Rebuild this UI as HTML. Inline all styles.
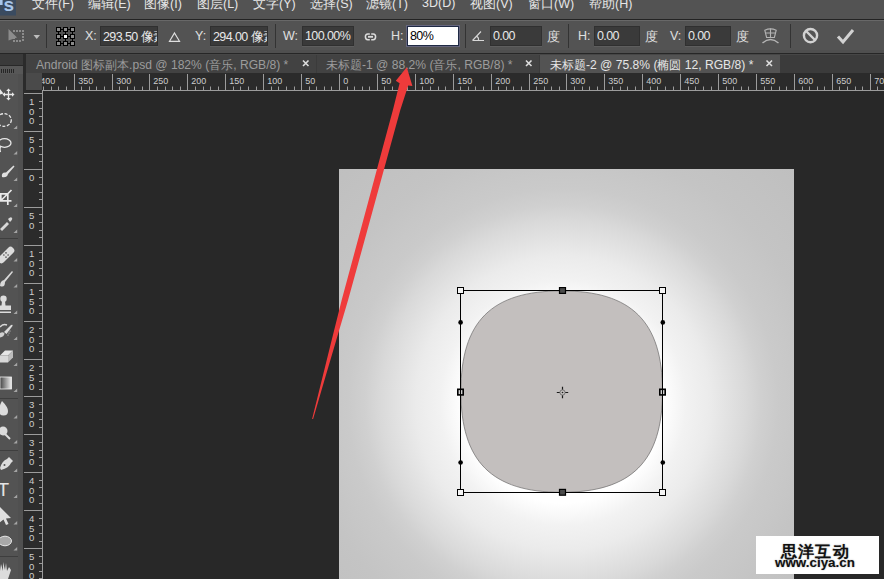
<!DOCTYPE html>
<html><head><meta charset="utf-8">
<style>
*{margin:0;padding:0;box-sizing:border-box}
html,body{width:884px;height:579px;overflow:hidden;background:#282828;font-family:"Liberation Sans", sans-serif}
.a{position:absolute}
#menu{left:0;top:0;width:884px;height:20px;background:#535353;}
#menu span{position:absolute;top:-4px;font-size:12.5px;color:#e6e6e6;white-space:nowrap}
#sep1{left:0;top:19px;width:884px;height:2px;background:linear-gradient(#232323 0 1px,#686868 1px 2px)}
#opts{left:0;top:21px;width:884px;height:32px;background:#535353}
#optline{left:0;top:50px;width:884px;height:5px;background:linear-gradient(#4f4f4f 0 3px,#262626 3px 4px,#464646 4px 5px)}
#tabs{left:0;top:55px;width:884px;height:18px;background:#3b3b3b}
.tab{position:absolute;top:0;height:18px;background:#424242;color:#9c9c9c;font-size:12.1px;white-space:nowrap}
.tab span{position:absolute;top:2px}
.tab .x{position:absolute;top:1px;color:#d8d8d8;font-size:13px}
.lbl{position:absolute;color:#e0e0e0;font-size:12.5px;top:8px}
.inp{position:absolute;top:5px;height:20px;background:#3a3a3a;border:1px solid #303030;box-shadow:0 1px 0 #5e5e5e;color:#e8e8e8;font-size:12.5px;letter-spacing:-0.6px;padding:2px 0 0 2px;white-space:nowrap;overflow:hidden}
.vsep{position:absolute;top:4px;width:1px;height:24px;background:#3a3a3a}
#canvas{left:42px;top:90px;width:842px;height:489px;background:#282828}
#doc{left:339px;top:169px;width:455px;height:410px;background:radial-gradient(circle at 224px 234px,#ffffff 0px,#ffffff 100px,#f2f2f2 123px,#ebebeb 147px,#e2e2e2 165px,#d9d9d9 183px,#d0d0d0 198px,#cacaca 215px,#c4c4c4 256px,#bfbfbf 330px)}
#tools{left:0;top:66px;width:23px;height:513px;background:#535353}
#toolstop{left:0;top:54px;width:23px;height:12px;background:#3b3b3b}
#toolgap{left:23px;top:54px;width:3px;height:525px;background:#2b2b2b}
#hr{left:42px;top:73px;width:842px;height:18px;background:#2b2b2b}
#vr{left:24px;top:91px;width:19px;height:488px;background:#2b2b2b}
#corner{left:26px;top:73px;width:16px;height:17px;background:#4a4a4a}
svg text{font-family:"Liberation Sans", sans-serif}
#hr line,#vr line{stroke:#9c9c9c;stroke-width:1}
#hr text{fill:#cdcdcd;font-size:9px}
#vr text{fill:#cdcdcd;font-size:9.6px}
</style></head><body>
<div id="canvas" class="a"></div>
<div id="doc" class="a"></div>
<svg class="a" style="left:0;top:0" width="884" height="579">
 <path d="M460.9 391.4 C460.9 321.4 491.5 290.9 561.5 290.9 C631.5 290.9 662.5 321.4 662.5 391.4 C662.5 461.4 631.5 492.3 561.5 492.3 C491.5 492.3 460.9 461.4 460.9 391.4 Z" fill="#c3bfbe" stroke="#6a6868" stroke-width="0.7"/>
 <rect x="460.5" y="290.5" width="202" height="202" fill="none" stroke="#000" stroke-width="1"/>
 <g stroke="#000" stroke-width="1" fill="#f4f4f4">
  <rect x="457.5" y="287.5" width="6" height="6"/>
  <rect x="659.5" y="287.5" width="6" height="6"/>
  <rect x="457.5" y="489.5" width="6" height="6"/>
  <rect x="659.5" y="489.5" width="6" height="6"/>
 </g>
 <g stroke="#000" stroke-width="1.2" fill="#4a4a4a">
  <rect x="559.5" y="287.6" width="6" height="5.8"/>
  <rect x="559.5" y="489.4" width="6" height="5.8"/>
 </g>
 <g stroke="#000" stroke-width="1.6" fill="#d0d0d0">
  <rect x="457.8" y="389.3" width="5.4" height="5.6"/>
  <rect x="659.8" y="389.3" width="5.4" height="5.6"/>
 </g>
 <path d="M460.5 389.5 V395.5 M662.5 389.5 V395.5" stroke="#000" stroke-width="1"/>
 <g fill="#000"><circle cx="460.6" cy="322.4" r="2.3"/><circle cx="460.6" cy="462.5" r="2.3"/><circle cx="662.8" cy="322.4" r="2.3"/><circle cx="662.8" cy="462.5" r="2.3"/></g>
 <g stroke="#1a1a1a" stroke-width="1.2" fill="none">
  <path d="M556.8 392.5 H559.8 M565.2 392.5 H568.2 M562.5 386.8 V389.8 M562.5 395.2 V398.2"/>
  <circle cx="562.5" cy="392.5" r="2.6" stroke="#555" stroke-width="0.7"/>
 </g>
 <circle cx="562.5" cy="392.5" r="0.8" fill="#222"/>
</svg>

<div class="a" style="left:756px;top:536px;width:123px;height:38px;background:#fff"></div>
<div class="a" style="left:781px;top:542px;font-size:16px;font-weight:bold;color:#111;letter-spacing:1.2px;white-space:nowrap;text-shadow:0 0 1.5px #999">思洋互动</div>
<div class="a" style="left:775px;top:555px;font-size:13.4px;font-weight:bold;color:#111;white-space:nowrap;text-shadow:0 0 1.5px #999">www.ciya.cn</div>


<div id="menu" class="a">
 <svg class="a" style="left:0;top:0" width="17" height="16"><rect x="0" y="0" width="16" height="15.5" fill="#3a4b60"/><text x="3.5" y="11" font-family="Liberation Sans" font-weight="bold" font-size="19" fill="#a9c7ea">s</text><rect x="0" y="0" width="2.6" height="5" fill="#a9c7ea"/></svg>
 <span style="left:32px">文件(F)</span>
 <span style="left:88px">编辑(E)</span>
 <span style="left:144px">图像(I)</span>
 <span style="left:197px">图层(L)</span>
 <span style="left:253px">文字(Y)</span>
 <span style="left:310px">选择(S)</span>
 <span style="left:366px">滤镜(T)</span>
 <span style="left:422px">3D(D)</span>
 <span style="left:470px">视图(V)</span>
 <span style="left:528px">窗口(W)</span>
 <span style="left:589px">帮助(H)</span>
</div>
<div id="sep1" class="a"></div>
<div id="opts" class="a">
 <svg class="a" style="left:0;top:0" width="884" height="32">
  <g fill="#8c8c8c">
   <path d="M8.5 8 L17 16.5 L8.5 19.5 Z"/>
   <rect x="13" y="9" width="2" height="2"/><rect x="16" y="9" width="2" height="2"/><rect x="19" y="9" width="2" height="2"/><rect x="22" y="9" width="2" height="2"/>
   <rect x="22" y="12" width="2" height="2"/><rect x="22" y="15" width="2" height="2"/><rect x="22" y="18" width="2" height="2"/>
   <rect x="13" y="19" width="2" height="2"/><rect x="16" y="19" width="2" height="2"/><rect x="19" y="19" width="2" height="2"/>
   <rect x="13" y="16" width="2" height="2"/>
  </g>
  <path d="M33.5 14 L40 14 L36.75 18 Z" fill="#bdbdbd"/>
  <rect x="46" y="3" width="1" height="24" fill="#333"/>
  <path d="M58.5 8.5 V22.5 M65.5 8.5 V22.5 M72.5 8.5 V22.5 M58.5 8.5 H72.5 M58.5 15.5 H72.5 M58.5 22.5 H72.5" stroke="#000" stroke-width="1" fill="none"/>
  <g stroke="#000" stroke-width="1"><rect x="56.5" y="6.5" width="4" height="4" fill="#8a8a8a"/><rect x="63.5" y="6.5" width="4" height="4" fill="#8a8a8a"/><rect x="70.5" y="6.5" width="4" height="4" fill="#8a8a8a"/><rect x="56.5" y="13.5" width="4" height="4" fill="#8a8a8a"/><rect x="63.5" y="13.5" width="4" height="4" fill="#fff"/><rect x="70.5" y="13.5" width="4" height="4" fill="#8a8a8a"/><rect x="56.5" y="20.5" width="4" height="4" fill="#8a8a8a"/><rect x="63.5" y="20.5" width="4" height="4" fill="#8a8a8a"/><rect x="70.5" y="20.5" width="4" height="4" fill="#8a8a8a"/></g>
  <path d="M174.5 12 L179.5 20.3 H169.5 Z" fill="none" stroke="#e0e0e0" stroke-width="1.2"/>
  <rect x="275" y="3" width="1" height="24" fill="#333"/>
  <g fill="none" stroke="#dcdcdc" stroke-width="1.5">
   <path d="M369.8 12.9 H367.8 Q365.4 12.9 365.4 15.8 Q365.4 18.7 367.8 18.7 H369.8"/>
   <path d="M371.2 12.9 H373.2 Q375.6 12.9 375.6 15.8 Q375.6 18.7 373.2 18.7 H371.2"/>
  </g>
  <rect x="368" y="14.9" width="5" height="1.8" fill="#dcdcdc"/>
  <rect x="465" y="3" width="1" height="24" fill="#333"/>
  <path d="M472.5 19.5 H484 M472.5 19.5 L481 10.5 M478.5 19.5 Q479 16.5 476.5 15" fill="none" stroke="#d8d8d8" stroke-width="1.1"/>
  <rect x="568" y="3" width="1" height="24" fill="#333"/>
  <g fill="none" stroke="#b4b4b4" stroke-width="1.1">
   <path d="M764.8 9.2 Q770.5 6.6 776.2 9.2 L774.4 16.5 H766.6 Z"/>
   <path d="M770.5 7.4 V16.5 M765.8 12 H775.2"/>
   <path d="M762.5 22 Q770.5 15 778.5 22" stroke-width="1.4"/>
  </g>
  <rect x="790" y="3" width="1" height="24" fill="#333"/>
  <g fill="none" stroke="#d2d2d2" stroke-width="2.4">
   <circle cx="810.5" cy="14.6" r="6.6"/>
   <path d="M806 10 L815 19"/>
  </g>
  <path d="M838 15.5 L843 21 L853 9" fill="none" stroke="#d2d2d2" stroke-width="3"/>
 </svg>
 <span class="lbl" style="left:85px">X:</span>
 <div class="inp" style="left:100px;width:58px">293.50 像素</div>
 <span class="lbl" style="left:195px">Y:</span>
 <div class="inp" style="left:210px;width:58px">294.00 像素</div>
 <span class="lbl" style="left:283px">W:</span>
 <div class="inp" style="left:302px;width:52px">100.00%</div>
 <span class="lbl" style="left:391px">H:</span>
 <div class="inp" style="left:407px;width:52px;background:#fff;border-color:#1f2a44;color:#000;box-shadow:0 0 0 1px #66667e">80%</div>
 <div class="inp" style="left:490px;width:52px">0.00</div>
 <span class="lbl" style="left:547px">度</span>
 <span class="lbl" style="left:578px">H:</span>
 <div class="inp" style="left:594px;width:46px">0.00</div>
 <span class="lbl" style="left:645px">度</span>
 <span class="lbl" style="left:670px">V:</span>
 <div class="inp" style="left:685px;width:46px">0.00</div>
 <span class="lbl" style="left:736px">度</span>
</div>
<div id="optline" class="a"></div>
<div id="tabs" class="a">
 <div class="tab" style="left:26px;width:290px"><span style="left:10px">Android 图标副本.psd @ 182% (音乐, RGB/8) *</span></div>
 <div class="tab" style="left:317px;width:222px"><span style="left:9px">未标题-1 @ 88.2% (音乐, RGB/8) *</span></div>
 <div class="tab" style="left:540px;width:240px;background:#535353;color:#e6e6e6"><span style="left:10px">未标题-2 @ 75.8% (椭圆 12, RGB/8) *</span></div>
 <svg class="a" style="left:0;top:-1px" width="884" height="19"><g stroke="#dedede" stroke-width="1.6">
  <path d="M303 6.5 L308.5 12 M308.5 6.5 L303 12"/>
  <path d="M526 6.5 L531.5 12 M531.5 6.5 L526 12"/>
  <path d="M766.5 6.5 L772 12 M772 6.5 L766.5 12"/>
 </g></svg>
</div>
<svg class="a" style="left:0;top:54px" width="23" height="525">
 <rect x="0" y="0" width="23" height="11" fill="#3a3a3a"/>
 <rect x="0" y="11" width="23" height="1" fill="#282828"/>
 <rect x="0" y="12" width="23" height="8" fill="#575757"/>
 <g fill="#262626"><rect x="1" y="15" width="1" height="4"/><rect x="3" y="15" width="1" height="4"/><rect x="5" y="15" width="1" height="4"/><rect x="7" y="15" width="1" height="4"/><rect x="9" y="15" width="1" height="4"/><rect x="11" y="15" width="1" height="4"/><rect x="13" y="15" width="1" height="4"/></g>
 <rect x="0" y="20" width="23" height="505" fill="#535353"/>
 <rect x="18" y="20" width="5" height="505" fill="#505050"/>
</svg>
<svg class="a" style="left:0;top:0" width="23" height="579">
 <g fill="#a4a4a4">
  <path d="M13.5 129.0 L17.2 129.0 L17.2 125.5 Z"/><path d="M13.5 154.5 L17.2 154.5 L17.2 151.0 Z"/><path d="M13.5 181.0 L17.2 181.0 L17.2 177.5 Z"/>
  <path d="M13.5 207.0 L17.2 207.0 L17.2 203.5 Z"/><path d="M13.5 233.0 L17.2 233.0 L17.2 229.5 Z"/><path d="M13.5 261.5 L17.2 261.5 L17.2 258.0 Z"/>
  <path d="M13.5 287.5 L17.2 287.5 L17.2 284.0 Z"/><path d="M13.5 314.0 L17.2 314.0 L17.2 310.5 Z"/><path d="M13.5 340.0 L17.2 340.0 L17.2 336.5 Z"/>
  <path d="M13.5 366.0 L17.2 366.0 L17.2 362.5 Z"/><path d="M13.5 392.0 L17.2 392.0 L17.2 388.5 Z"/><path d="M13.5 418.5 L17.2 418.5 L17.2 415.0 Z"/>
  <path d="M13.5 443.5 L17.2 443.5 L17.2 440.0 Z"/><path d="M13.5 472.0 L17.2 472.0 L17.2 468.5 Z"/><path d="M13.5 498.0 L17.2 498.0 L17.2 494.5 Z"/>
  <path d="M13.5 524.5 L17.2 524.5 L17.2 521.0 Z"/><path d="M13.5 550.5 L17.2 550.5 L17.2 547.0 Z"/>
 </g>
 <g fill="#3e3e3e"><rect x="0" y="238" width="18" height="1"/><rect x="0" y="398" width="18" height="1"/><rect x="0" y="450" width="18" height="1"/><rect x="0" y="556" width="18" height="1"/></g>
 <g stroke="#e8e8e8" fill="none" stroke-width="1.3">
  <path d="M8.5 90 V99 M4 94.5 H13"/>
  <ellipse cx="4" cy="120" rx="7.3" ry="6.3" stroke-dasharray="3 1.6"/>
  <ellipse cx="4.5" cy="143" rx="6.5" ry="4.3"/><path d="M0.5 146.5 Q-0.5 149 0.5 152"/>
  <path d="M0 193.8 H7.8 V205 M0.8 193.8 V200.8 H11.5 M1.5 200 L11.5 190" stroke-width="1.7"/>
 </g>
 <path d="M8.5 88.5 L10.8 91 H6.2Z M8.5 100.5 L10.8 98 H6.2Z M2.5 94.5 L5 92.2 V96.8Z M14.5 94.5 L12 92.2 V96.8Z M0 89 L3.5 93.5 L0 94.5Z" fill="#e8e8e8"/>
 <path d="M2 177 Q1 172 6 172.5 L13.5 165.5 L14.5 166.5 L8 174 Q7 178 2 177Z" fill="#e0e0e0"/>
 <path d="M0 229 L7 222 L9 224 L2 231 Z M8 219 Q11 216 12 218 Q13 219 10 222 Z" fill="#d8d8d8"/>
 <g transform="translate(6,255) rotate(-45)"><rect x="-10" y="-3.6" width="20" height="7.2" rx="3.2" fill="#dcdcdc"/><g fill="#555"><circle cx="-1.5" cy="-1.5" r="0.8"/><circle cx="1.5" cy="-1.5" r="0.8"/><circle cx="-1.5" cy="1.5" r="0.8"/><circle cx="1.5" cy="1.5" r="0.8"/></g></g>
 <path d="M0 286 Q0 281 4 280 L12 271 L13 272 L5 282 Q5 288 0 286Z" fill="#d8d8d8"/>
 <circle cx="3.5" cy="298.8" r="3.2" fill="#dcdcdc"/><path d="M2 301 H5 L5.5 305.5 H11 V310 H0 V305.5 H1.5 Z M0 311.5 H11 V313 H0Z" fill="#dcdcdc"/>
 <path d="M0 327 Q3 323.5 7 325" fill="none" stroke="#d8d8d8" stroke-width="1.4"/><path d="M4 332 L11 325 Q13 324 12.5 326 L6.5 334 Z" fill="#dcdcdc"/><path d="M0 333 Q3 331.5 4.5 333.5 Q4 337 0 337.5Z" fill="#d0d0d0"/><g fill="#eee"><circle cx="10" cy="331" r="0.5"/><circle cx="9" cy="333" r="0.5"/><circle cx="8" cy="335" r="0.5"/></g>
 <path d="M0 355.5 L5 350.5 H13 L8 355.5 Z" fill="#e6e6e6"/><path d="M0 355.5 H8 V362.5 H0Z" fill="#d8d8d8"/><path d="M8 355.5 L13 350.5 V357.5 L8 362.5Z" fill="#bcbcbc"/>
 <defs><linearGradient id="gr" x1="0" x2="1"><stop offset="0" stop-color="#444"/><stop offset="1" stop-color="#eee"/></linearGradient></defs>
 <rect x="0" y="377" width="11.5" height="12" fill="url(#gr)" stroke="#f0f0f0" stroke-width="0.8"/>
 <path d="M2 401 Q8 407 8 411 Q8 415.5 3.5 415.5 Q-1 415.5 -1 411 Q-1 406 2 401Z" fill="#dcdcdc"/>
 <circle cx="3" cy="431" r="4.5" fill="#dcdcdc"/><path d="M5 434 L10 439" stroke="#dcdcdc" stroke-width="2"/>
 <path d="M0 468 Q2 461 7 459 L9 457 L13 461 L11 463 Q9 468 1 470 Z" fill="#dcdcdc"/><circle cx="4.5" cy="465" r="1" fill="#535353"/>
 <text x="-2.5" y="495.5" font-family="Liberation Serif" font-size="19" fill="#e4e4e4">T</text>
 <path d="M-1 506 L11 518 L6 518.5 L8.5 524 L6 525 L3.5 519.5 L-1 523 Z" fill="#e0e0e0"/>
 <ellipse cx="5" cy="541" rx="6.5" ry="4.8" fill="#a8a8a8" stroke="#e8e8e8" stroke-width="1"/>
 <path d="M0 579 V571 L1 564 L3 571 L3 562 L5 570 L6 563 L7 571 L9 567 L11 570 L8 579Z" fill="#dcdcdc"/>
</svg>
<div id="toolgap" class="a"></div>
<div id="corner" class="a"></div>
<svg id="hr" class="a" width="842" height="18" style="overflow:hidden"><rect x="0" y="17" width="842" height="1" fill="#9c9c9c"/><line x1="-28.5" y1="13.5" x2="-28.5" y2="17"/>
<line x1="-20.5" y1="13.5" x2="-20.5" y2="17"/>
<line x1="-13.5" y1="13.5" x2="-13.5" y2="17"/>
<line x1="-5.5" y1="1" x2="-5.5" y2="17"/>
<text x="-1.7000000000000002" y="10.9">400</text>
<line x1="1.5" y1="13.5" x2="1.5" y2="17"/>
<line x1="9.5" y1="13.5" x2="9.5" y2="17"/>
<line x1="16.5" y1="13.5" x2="16.5" y2="17"/>
<line x1="24.5" y1="13.5" x2="24.5" y2="17"/>
<line x1="32.5" y1="1" x2="32.5" y2="17"/>
<text x="36.3" y="10.9">350</text>
<line x1="39.5" y1="13.5" x2="39.5" y2="17"/>
<line x1="47.5" y1="13.5" x2="47.5" y2="17"/>
<line x1="54.5" y1="13.5" x2="54.5" y2="17"/>
<line x1="62.5" y1="13.5" x2="62.5" y2="17"/>
<line x1="70.5" y1="1" x2="70.5" y2="17"/>
<text x="74.3" y="10.9">300</text>
<line x1="77.5" y1="13.5" x2="77.5" y2="17"/>
<line x1="85.5" y1="13.5" x2="85.5" y2="17"/>
<line x1="92.5" y1="13.5" x2="92.5" y2="17"/>
<line x1="100.5" y1="13.5" x2="100.5" y2="17"/>
<line x1="107.5" y1="1" x2="107.5" y2="17"/>
<text x="111.3" y="10.9">250</text>
<line x1="115.5" y1="13.5" x2="115.5" y2="17"/>
<line x1="123.5" y1="13.5" x2="123.5" y2="17"/>
<line x1="130.5" y1="13.5" x2="130.5" y2="17"/>
<line x1="138.5" y1="13.5" x2="138.5" y2="17"/>
<line x1="145.5" y1="1" x2="145.5" y2="17"/>
<text x="149.3" y="10.9">200</text>
<line x1="153.5" y1="13.5" x2="153.5" y2="17"/>
<line x1="161.5" y1="13.5" x2="161.5" y2="17"/>
<line x1="168.5" y1="13.5" x2="168.5" y2="17"/>
<line x1="176.5" y1="13.5" x2="176.5" y2="17"/>
<line x1="183.5" y1="1" x2="183.5" y2="17"/>
<text x="187.3" y="10.9">150</text>
<line x1="191.5" y1="13.5" x2="191.5" y2="17"/>
<line x1="198.5" y1="13.5" x2="198.5" y2="17"/>
<line x1="206.5" y1="13.5" x2="206.5" y2="17"/>
<line x1="214.5" y1="13.5" x2="214.5" y2="17"/>
<line x1="221.5" y1="1" x2="221.5" y2="17"/>
<text x="225.3" y="10.9">100</text>
<line x1="229.5" y1="13.5" x2="229.5" y2="17"/>
<line x1="236.5" y1="13.5" x2="236.5" y2="17"/>
<line x1="244.5" y1="13.5" x2="244.5" y2="17"/>
<line x1="252.5" y1="13.5" x2="252.5" y2="17"/>
<line x1="259.5" y1="1" x2="259.5" y2="17"/>
<text x="263.3" y="10.9">50</text>
<line x1="267.5" y1="13.5" x2="267.5" y2="17"/>
<line x1="274.5" y1="13.5" x2="274.5" y2="17"/>
<line x1="282.5" y1="13.5" x2="282.5" y2="17"/>
<line x1="289.5" y1="13.5" x2="289.5" y2="17"/>
<line x1="297.5" y1="1" x2="297.5" y2="17"/>
<text x="301.3" y="10.9">0</text>
<line x1="305.5" y1="13.5" x2="305.5" y2="17"/>
<line x1="312.5" y1="13.5" x2="312.5" y2="17"/>
<line x1="320.5" y1="13.5" x2="320.5" y2="17"/>
<line x1="327.5" y1="13.5" x2="327.5" y2="17"/>
<line x1="335.5" y1="1" x2="335.5" y2="17"/>
<text x="339.3" y="10.9">50</text>
<line x1="342.5" y1="13.5" x2="342.5" y2="17"/>
<line x1="350.5" y1="13.5" x2="350.5" y2="17"/>
<line x1="358.5" y1="13.5" x2="358.5" y2="17"/>
<line x1="365.5" y1="13.5" x2="365.5" y2="17"/>
<line x1="373.5" y1="1" x2="373.5" y2="17"/>
<text x="377.3" y="10.9">100</text>
<line x1="380.5" y1="13.5" x2="380.5" y2="17"/>
<line x1="388.5" y1="13.5" x2="388.5" y2="17"/>
<line x1="396.5" y1="13.5" x2="396.5" y2="17"/>
<line x1="403.5" y1="13.5" x2="403.5" y2="17"/>
<line x1="411.5" y1="1" x2="411.5" y2="17"/>
<text x="415.3" y="10.9">150</text>
<line x1="418.5" y1="13.5" x2="418.5" y2="17"/>
<line x1="426.5" y1="13.5" x2="426.5" y2="17"/>
<line x1="433.5" y1="13.5" x2="433.5" y2="17"/>
<line x1="441.5" y1="13.5" x2="441.5" y2="17"/>
<line x1="449.5" y1="1" x2="449.5" y2="17"/>
<text x="453.3" y="10.9">200</text>
<line x1="456.5" y1="13.5" x2="456.5" y2="17"/>
<line x1="464.5" y1="13.5" x2="464.5" y2="17"/>
<line x1="471.5" y1="13.5" x2="471.5" y2="17"/>
<line x1="479.5" y1="13.5" x2="479.5" y2="17"/>
<line x1="487.5" y1="1" x2="487.5" y2="17"/>
<text x="491.3" y="10.9">250</text>
<line x1="494.5" y1="13.5" x2="494.5" y2="17"/>
<line x1="502.5" y1="13.5" x2="502.5" y2="17"/>
<line x1="509.5" y1="13.5" x2="509.5" y2="17"/>
<line x1="517.5" y1="13.5" x2="517.5" y2="17"/>
<line x1="524.5" y1="1" x2="524.5" y2="17"/>
<text x="528.3" y="10.9">300</text>
<line x1="532.5" y1="13.5" x2="532.5" y2="17"/>
<line x1="540.5" y1="13.5" x2="540.5" y2="17"/>
<line x1="547.5" y1="13.5" x2="547.5" y2="17"/>
<line x1="555.5" y1="13.5" x2="555.5" y2="17"/>
<line x1="562.5" y1="1" x2="562.5" y2="17"/>
<text x="566.3" y="10.9">350</text>
<line x1="570.5" y1="13.5" x2="570.5" y2="17"/>
<line x1="578.5" y1="13.5" x2="578.5" y2="17"/>
<line x1="585.5" y1="13.5" x2="585.5" y2="17"/>
<line x1="593.5" y1="13.5" x2="593.5" y2="17"/>
<line x1="600.5" y1="1" x2="600.5" y2="17"/>
<text x="604.3" y="10.9">400</text>
<line x1="608.5" y1="13.5" x2="608.5" y2="17"/>
<line x1="615.5" y1="13.5" x2="615.5" y2="17"/>
<line x1="623.5" y1="13.5" x2="623.5" y2="17"/>
<line x1="631.5" y1="13.5" x2="631.5" y2="17"/>
<line x1="638.5" y1="1" x2="638.5" y2="17"/>
<text x="642.3" y="10.9">450</text>
<line x1="646.5" y1="13.5" x2="646.5" y2="17"/>
<line x1="653.5" y1="13.5" x2="653.5" y2="17"/>
<line x1="661.5" y1="13.5" x2="661.5" y2="17"/>
<line x1="669.5" y1="13.5" x2="669.5" y2="17"/>
<line x1="676.5" y1="1" x2="676.5" y2="17"/>
<text x="680.3" y="10.9">500</text>
<line x1="684.5" y1="13.5" x2="684.5" y2="17"/>
<line x1="691.5" y1="13.5" x2="691.5" y2="17"/>
<line x1="699.5" y1="13.5" x2="699.5" y2="17"/>
<line x1="706.5" y1="13.5" x2="706.5" y2="17"/>
<line x1="714.5" y1="1" x2="714.5" y2="17"/>
<text x="718.3" y="10.9">550</text>
<line x1="722.5" y1="13.5" x2="722.5" y2="17"/>
<line x1="729.5" y1="13.5" x2="729.5" y2="17"/>
<line x1="737.5" y1="13.5" x2="737.5" y2="17"/>
<line x1="744.5" y1="13.5" x2="744.5" y2="17"/>
<line x1="752.5" y1="1" x2="752.5" y2="17"/>
<text x="756.3" y="10.9">600</text>
<line x1="760.5" y1="13.5" x2="760.5" y2="17"/>
<line x1="767.5" y1="13.5" x2="767.5" y2="17"/>
<line x1="775.5" y1="13.5" x2="775.5" y2="17"/>
<line x1="782.5" y1="13.5" x2="782.5" y2="17"/>
<line x1="790.5" y1="1" x2="790.5" y2="17"/>
<text x="794.3" y="10.9">650</text>
<line x1="797.5" y1="13.5" x2="797.5" y2="17"/>
<line x1="805.5" y1="13.5" x2="805.5" y2="17"/>
<line x1="813.5" y1="13.5" x2="813.5" y2="17"/>
<line x1="820.5" y1="13.5" x2="820.5" y2="17"/>
<line x1="828.5" y1="1" x2="828.5" y2="17"/>
<text x="832.3" y="10.9">700</text>
<line x1="835.5" y1="13.5" x2="835.5" y2="17"/></svg>
<svg id="vr" class="a" width="19" height="488"><rect x="18" y="0" width="1" height="488" fill="#9c9c9c"/><line x1="15" y1="-12.5" x2="18" y2="-12.5"/>
<line x1="15" y1="-4.5" x2="18" y2="-4.5"/>
<line x1="0" y1="2.5" x2="18" y2="2.5"/>
<text x="5" y="13.7">1</text>
<text x="5" y="23.5">0</text>
<text x="5" y="33.3">0</text>
<line x1="15" y1="10.5" x2="18" y2="10.5"/>
<line x1="15" y1="17.5" x2="18" y2="17.5"/>
<line x1="15" y1="25.5" x2="18" y2="25.5"/>
<line x1="15" y1="33.5" x2="18" y2="33.5"/>
<line x1="0" y1="40.5" x2="18" y2="40.5"/>
<text x="5" y="51.7">5</text>
<text x="5" y="61.5">0</text>
<line x1="15" y1="48.5" x2="18" y2="48.5"/>
<line x1="15" y1="55.5" x2="18" y2="55.5"/>
<line x1="15" y1="63.5" x2="18" y2="63.5"/>
<line x1="15" y1="70.5" x2="18" y2="70.5"/>
<line x1="0" y1="78.5" x2="18" y2="78.5"/>
<text x="5" y="89.7">0</text>
<line x1="15" y1="86.5" x2="18" y2="86.5"/>
<line x1="15" y1="93.5" x2="18" y2="93.5"/>
<line x1="15" y1="101.5" x2="18" y2="101.5"/>
<line x1="15" y1="108.5" x2="18" y2="108.5"/>
<line x1="0" y1="116.5" x2="18" y2="116.5"/>
<text x="5" y="127.7">5</text>
<text x="5" y="137.5">0</text>
<line x1="15" y1="123.5" x2="18" y2="123.5"/>
<line x1="15" y1="131.5" x2="18" y2="131.5"/>
<line x1="15" y1="139.5" x2="18" y2="139.5"/>
<line x1="15" y1="146.5" x2="18" y2="146.5"/>
<line x1="0" y1="154.5" x2="18" y2="154.5"/>
<text x="5" y="165.7">1</text>
<text x="5" y="175.5">0</text>
<text x="5" y="185.3">0</text>
<line x1="15" y1="161.5" x2="18" y2="161.5"/>
<line x1="15" y1="169.5" x2="18" y2="169.5"/>
<line x1="15" y1="177.5" x2="18" y2="177.5"/>
<line x1="15" y1="184.5" x2="18" y2="184.5"/>
<line x1="0" y1="192.5" x2="18" y2="192.5"/>
<text x="5" y="203.7">1</text>
<text x="5" y="213.5">5</text>
<text x="5" y="223.3">0</text>
<line x1="15" y1="199.5" x2="18" y2="199.5"/>
<line x1="15" y1="207.5" x2="18" y2="207.5"/>
<line x1="15" y1="214.5" x2="18" y2="214.5"/>
<line x1="15" y1="222.5" x2="18" y2="222.5"/>
<line x1="0" y1="230.5" x2="18" y2="230.5"/>
<text x="5" y="241.7">2</text>
<text x="5" y="251.5">0</text>
<text x="5" y="261.3">0</text>
<line x1="15" y1="237.5" x2="18" y2="237.5"/>
<line x1="15" y1="245.5" x2="18" y2="245.5"/>
<line x1="15" y1="252.5" x2="18" y2="252.5"/>
<line x1="15" y1="260.5" x2="18" y2="260.5"/>
<line x1="0" y1="268.5" x2="18" y2="268.5"/>
<text x="5" y="279.7">2</text>
<text x="5" y="289.5">5</text>
<text x="5" y="299.3">0</text>
<line x1="15" y1="275.5" x2="18" y2="275.5"/>
<line x1="15" y1="283.5" x2="18" y2="283.5"/>
<line x1="15" y1="290.5" x2="18" y2="290.5"/>
<line x1="15" y1="298.5" x2="18" y2="298.5"/>
<line x1="0" y1="305.5" x2="18" y2="305.5"/>
<text x="5" y="316.7">3</text>
<text x="5" y="326.5">0</text>
<text x="5" y="336.3">0</text>
<line x1="15" y1="313.5" x2="18" y2="313.5"/>
<line x1="15" y1="321.5" x2="18" y2="321.5"/>
<line x1="15" y1="328.5" x2="18" y2="328.5"/>
<line x1="15" y1="336.5" x2="18" y2="336.5"/>
<line x1="0" y1="343.5" x2="18" y2="343.5"/>
<text x="5" y="354.7">3</text>
<text x="5" y="364.5">5</text>
<text x="5" y="374.3">0</text>
<line x1="15" y1="351.5" x2="18" y2="351.5"/>
<line x1="15" y1="359.5" x2="18" y2="359.5"/>
<line x1="15" y1="366.5" x2="18" y2="366.5"/>
<line x1="15" y1="374.5" x2="18" y2="374.5"/>
<line x1="0" y1="381.5" x2="18" y2="381.5"/>
<text x="5" y="392.7">4</text>
<text x="5" y="402.5">0</text>
<text x="5" y="412.3">0</text>
<line x1="15" y1="389.5" x2="18" y2="389.5"/>
<line x1="15" y1="396.5" x2="18" y2="396.5"/>
<line x1="15" y1="404.5" x2="18" y2="404.5"/>
<line x1="15" y1="412.5" x2="18" y2="412.5"/>
<line x1="0" y1="419.5" x2="18" y2="419.5"/>
<text x="5" y="430.7">4</text>
<text x="5" y="440.5">5</text>
<text x="5" y="450.3">0</text>
<line x1="15" y1="427.5" x2="18" y2="427.5"/>
<line x1="15" y1="434.5" x2="18" y2="434.5"/>
<line x1="15" y1="442.5" x2="18" y2="442.5"/>
<line x1="15" y1="450.5" x2="18" y2="450.5"/>
<line x1="0" y1="457.5" x2="18" y2="457.5"/>
<text x="5" y="468.7">5</text>
<text x="5" y="478.5">0</text>
<text x="5" y="488.3">0</text>
<line x1="15" y1="465.5" x2="18" y2="465.5"/>
<line x1="15" y1="472.5" x2="18" y2="472.5"/>
<line x1="15" y1="480.5" x2="18" y2="480.5"/>
<line x1="15" y1="487.5" x2="18" y2="487.5"/>
<line x1="0" y1="495.5" x2="18" y2="495.5"/>
<text x="5" y="506.7">5</text>
<text x="5" y="516.5">5</text>
<text x="5" y="526.3">0</text></svg>
<svg class="a" style="left:0;top:0" width="884" height="579">
 <path d="M312.1 419.0 L321.8 380.0 L331.7 340.0 L341.7 300.0 L355.2 250.0 L368.7 200.0 L382.1 150.0 L392.9 110.0 L399.6 83.2 L395.8 80.8 L406.8 67.3 L412.4 86.0 L408.2 85.4 L400.3 110.0 L389.3 150.0 L375.6 200.0 L361.9 250.0 L348.1 300.0 L336.3 340.0 L324.5 380.0 L313.1 419.0 Z" fill="#ef3b3b"/>
</svg>
</body></html>
